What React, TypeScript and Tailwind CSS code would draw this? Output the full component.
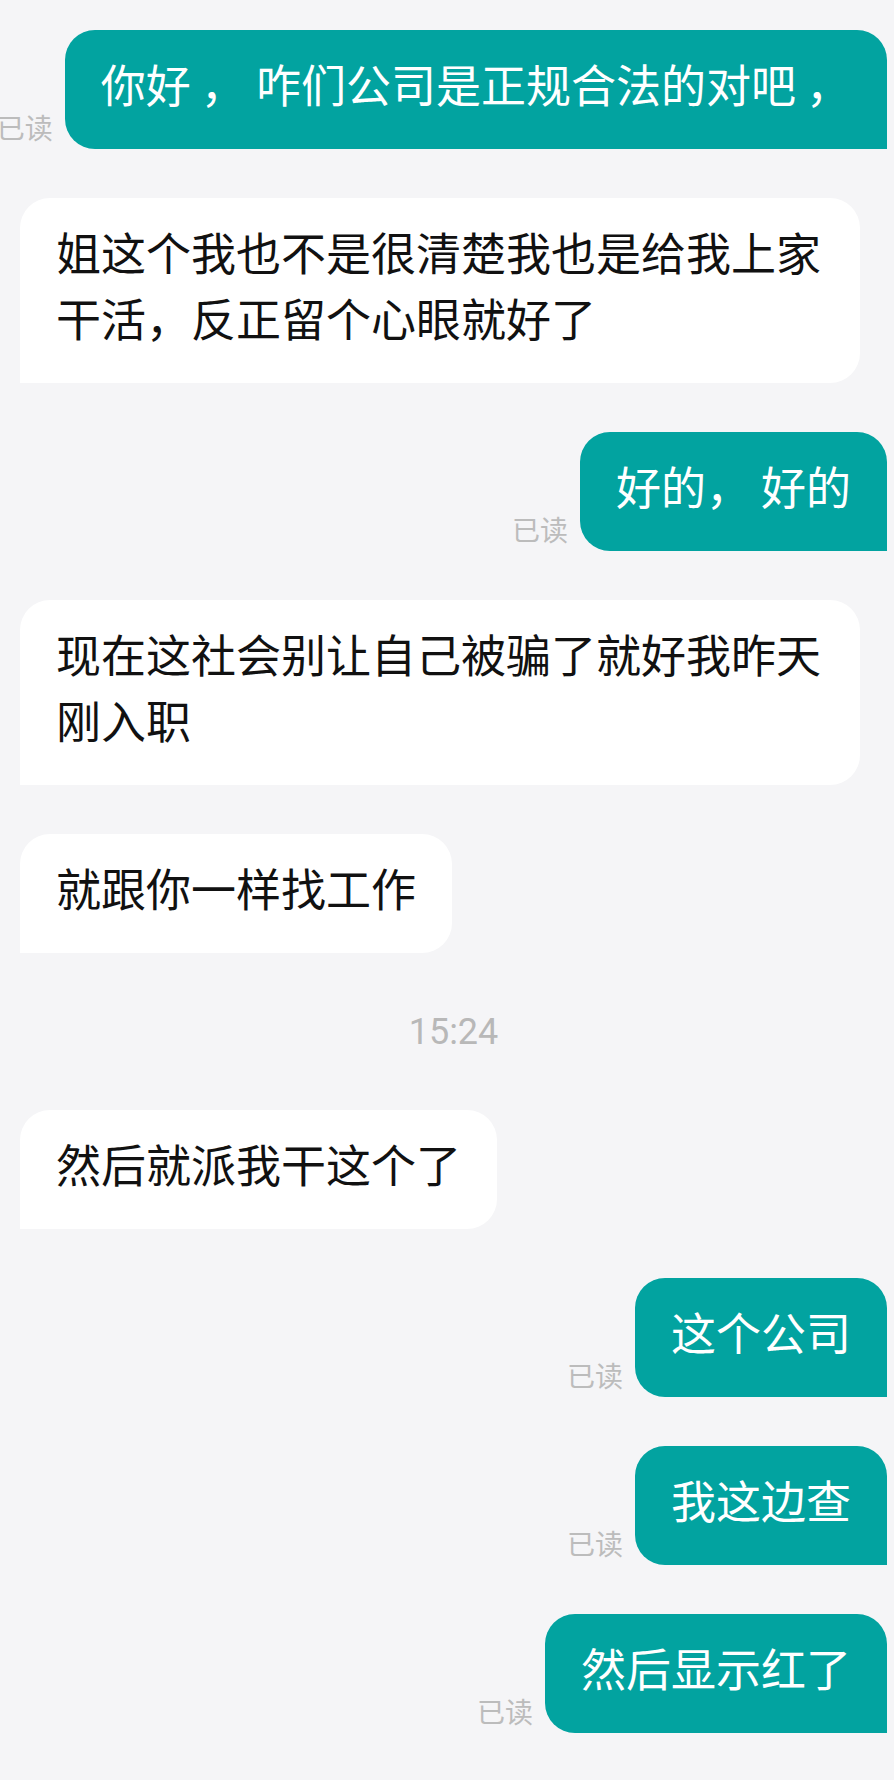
import React from 'react';

type Msg =
	| { kind: 'sent'; text: string }
	| { kind: 'recv'; text: string }
	| { kind: 'time'; text: string };

const messages: Msg[] = [
	{ kind: 'sent', text: '你好 ， 咋们公司是正规合法的对吧 ，' },
	{ kind: 'recv', text: '姐这个我也不是很清楚我也是给我上家干活，反正留个心眼就好了' },
	{ kind: 'sent', text: '好的， 好的' },
	{ kind: 'recv', text: '现在这社会别让自己被骗了就好我昨天刚入职' },
	{ kind: 'recv', text: '就跟你一样找工作' },
	{ kind: 'time', text: '15:24' },
	{ kind: 'recv', text: '然后就派我干这个了' },
	{ kind: 'sent', text: '这个公司' },
	{ kind: 'sent', text: '我这边查' },
	{ kind: 'sent', text: '然后显示红了' },
];

const cjk = "font-['Noto_Sans_CJK_SC','Noto_Sans',sans-serif]";

const SentBubble = ({ text }: { text: string }) => (
	<div className="flex items-end justify-end">
		<span className={`${cjk} mr-3 mb-[8px] shrink-0 text-[28px] leading-[28px] text-[#bcbcbc]`}>
			已读
		</span>
		<div
			className={`${cjk} shrink-0 whitespace-pre rounded-[30px] rounded-br-none bg-[#02a3a0] px-[36px] pt-[21px] pb-[32px] text-[45px] leading-[66px] text-white`}
		>
			{text}
		</div>
	</div>
);

const RecvBubble = ({ text }: { text: string }) => (
	<div className="flex justify-start">
		<div
			className={`${cjk} max-w-[840px] rounded-[30px] rounded-bl-none bg-white px-[36px] pt-[21px] pb-[32px] text-[45px] leading-[66px] text-[#111111]`}
		>
			{text}
		</div>
	</div>
);

const TimeStamp = ({ text }: { text: string }) => (
	<div className="flex h-[59px] items-center justify-center">
		<span className="font-['Roboto',sans-serif] text-[36px] leading-none text-[#b8b8b8]">{text}</span>
	</div>
);

export default function App() {
	return (
		<div className="h-[1780px] w-[894px] overflow-hidden bg-[#f5f5f7]">
			<div className="ml-[20px] mr-[7px] flex flex-col gap-[49px] pt-[30px]">
				{messages.map((m, i) =>
					m.kind === 'sent' ? (
						<SentBubble key={i} text={m.text} />
					) : m.kind === 'recv' ? (
						<RecvBubble key={i} text={m.text} />
					) : (
						<TimeStamp key={i} text={m.text} />
					)
				)}
			</div>
		</div>
	);
}
